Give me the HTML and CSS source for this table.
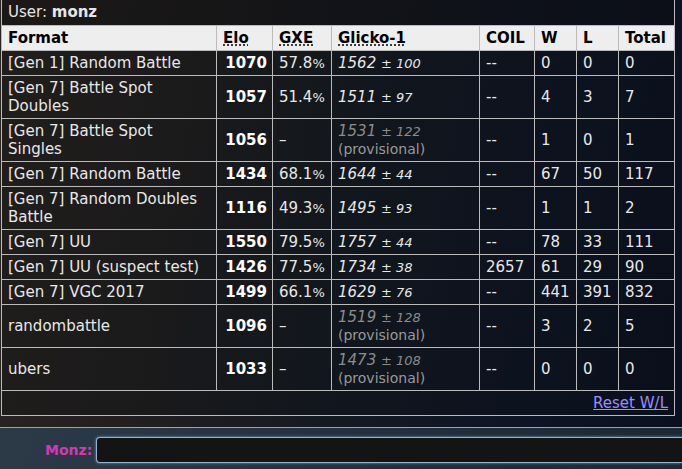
FILE: index.html
```html
<!DOCTYPE html>
<html>
<head>
<meta charset="utf-8">
<link rel="stylesheet" href="styles.css">
</head>
<body>
<div class="page">
  <div class="panel">
    <div class="user">User: <strong>monz</strong></div>
    <table class="ladder">
      <colgroup>
        <col class="c-format"><col class="c-elo"><col class="c-gxe"><col class="c-glicko"><col class="c-coil"><col class="c-w"><col class="c-l"><col class="c-total">
      </colgroup>
      <thead>
        <tr>
          <th>Format</th>
          <th><abbr>Elo</abbr></th>
          <th><abbr>GXE</abbr></th>
          <th><abbr>Glicko-1</abbr></th>
          <th>COIL</th>
          <th>W</th>
          <th>L</th>
          <th>Total</th>
        </tr>
      </thead>
      <tbody>
        <tr><td>[Gen 1] Random Battle</td><td class="elo">1070</td><td>57.8<small>%</small></td><td class="gl">1562 <small>± 100</small></td><td>--</td><td>0</td><td>0</td><td>0</td></tr>
        <tr><td>[Gen 7] Battle Spot Doubles</td><td class="elo">1057</td><td>51.4<small>%</small></td><td class="gl">1511 <small>± 97</small></td><td>--</td><td>4</td><td>3</td><td>7</td></tr>
        <tr><td>[Gen 7] Battle Spot Singles</td><td class="elo">1056</td><td>–</td><td class="gl prov"><em>1531 <small>± 122</small></em><br><span class="pv">(provisional)</span></td><td>--</td><td>1</td><td>0</td><td>1</td></tr>
        <tr><td>[Gen 7] Random Battle</td><td class="elo">1434</td><td>68.1<small>%</small></td><td class="gl">1644 <small>± 44</small></td><td>--</td><td>67</td><td>50</td><td>117</td></tr>
        <tr><td>[Gen 7] Random Doubles Battle</td><td class="elo">1116</td><td>49.3<small>%</small></td><td class="gl">1495 <small>± 93</small></td><td>--</td><td>1</td><td>1</td><td>2</td></tr>
        <tr><td>[Gen 7] UU</td><td class="elo">1550</td><td>79.5<small>%</small></td><td class="gl">1757 <small>± 44</small></td><td>--</td><td>78</td><td>33</td><td>111</td></tr>
        <tr><td>[Gen 7] UU (suspect test)</td><td class="elo">1426</td><td>77.5<small>%</small></td><td class="gl">1734 <small>± 38</small></td><td>2657</td><td>61</td><td>29</td><td>90</td></tr>
        <tr><td>[Gen 7] VGC 2017</td><td class="elo">1499</td><td>66.1<small>%</small></td><td class="gl">1629 <small>± 76</small></td><td>--</td><td>441</td><td>391</td><td>832</td></tr>
        <tr><td>randombattle</td><td class="elo">1096</td><td>–</td><td class="gl prov"><em>1519 <small>± 128</small></em><br><span class="pv">(provisional)</span></td><td>--</td><td>3</td><td>2</td><td>5</td></tr>
        <tr><td>ubers</td><td class="elo">1033</td><td>–</td><td class="gl prov"><em>1473 <small>± 108</small></em><br><span class="pv">(provisional)</span></td><td>--</td><td>0</td><td>0</td><td>0</td></tr>
        <tr class="reset"><td colspan="8"><a href="#">Reset W/L</a></td></tr>
      </tbody>
    </table>
  </div>
  <div class="chatbar">
    <label class="me">Monz:</label>
    <div class="input"></div>
  </div>
</div>
</body>
</html>
```

FILE: styles.css
```css
html, body {
  margin: 0;
  padding: 0;
  height: 100%;
}
body {
  font-family: "DejaVu Sans", Verdana, sans-serif;
  font-size: 15px;
  color: #e8e8e8;
  background: linear-gradient(100deg, #2a2520 0%, #22201f 25%, #161a22 50%, #0f1524 75%, #0b1020 100%);
  overflow: hidden;
}
.page {
  width: 682px;
  height: 469px;
  display: flex;
  flex-direction: column;
}
.panel {
  margin-left: 1px;
  width: 674px;
}
.user {
  height: 25px;
  line-height: 25px;
  padding-left: 6px;
  border-left: 1px solid #bbb;
  border-right: 1px solid #bbb;
  background: rgba(10, 10, 14, 0.45);
  color: #e6e6e6;
}
.ladder {
  width: 674px;
  border-collapse: collapse;
  table-layout: fixed;
  border: 1px solid #bbb;
  background: rgba(8, 10, 16, 0.25);
}
.c-format { width: 215px; }
.c-elo { width: 56px; }
.c-gxe { width: 59px; }
.c-glicko { width: 148px; }
.c-coil { width: 55px; }
.c-w { width: 42px; }
.c-l { width: 42px; }
.c-total { width: 56px; }
.ladder th, .ladder td {
  border: 1px solid #bbb;
  padding: 3px 6px;
  line-height: 18px;
  text-align: left;
  vertical-align: middle;
  white-space: normal;
}
.ladder th {
  background: #eeeeee;
  color: #000;
  font-weight: bold;
}
.ladder abbr {
  text-decoration: underline dotted;
  text-underline-offset: 2px;
}
.ladder td.elo {
  font-weight: bold;
  text-align: right;
  color: #fff;
  padding-left: 4px;
  padding-right: 5px;
}
.ladder td small {
  font-size: 13px;
  line-height: 1;
}
.ladder td.gl {
  font-style: italic;
}
.ladder td.prov {
  color: #8c8c8c;
  font-style: normal;
}
.ladder td.prov em {
  font-style: italic;
}
.ladder td.prov .pv {
  font-size: 14px;
  line-height: 1;
  color: #999;
}
.reset td {
  text-align: right !important;
  height: 18px;
}
.reset a {
  color: #9d8cff;
  text-decoration: underline;
}
.chatbar {
  margin-top: 11px;
  border-top: 1px solid #9aa4ae;
  flex: 1;
  display: flex;
  align-items: center;
  gap: 4px;
  padding-left: 45px;
  padding-top: 2px;
  background: linear-gradient(100deg, #2c3a48 0%, #243241 40%, #1b2836 100%);
}
.me {
  color: #d23ab5;
  font-weight: bold;
  font-size: 14px;
}
.input {
  flex: 1;
  height: 24px;
  background: #141414;
  border: 1px solid #8fb4d4;
  border-right: none;
  border-radius: 4px 0 0 4px;
  box-shadow: 0 0 3px #6a9cc6;
}
```
